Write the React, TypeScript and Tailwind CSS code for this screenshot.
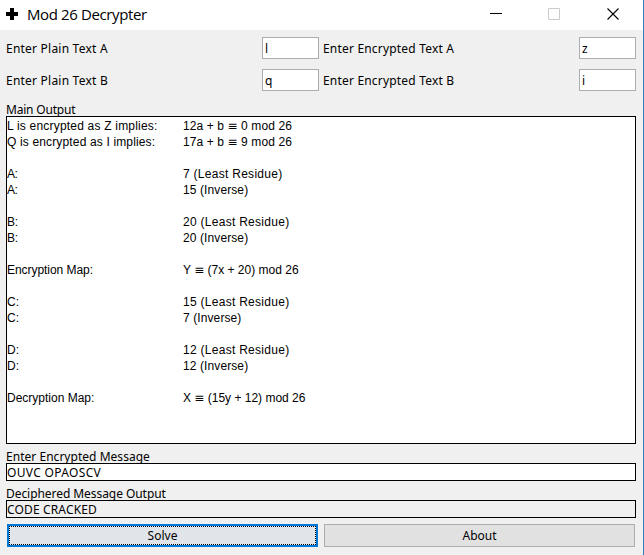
import type { ReactNode } from 'react';

const tahoma = "font-['Noto_Sans',sans-serif] text-[12px]";

const output: [string, string, string, string][] = [
  ['L is encrypted as Z implies:', 'tracking-[0.2px]', '12a + b ≡ 0 mod 26', 'tracking-[0.1px]'],
  ['Q is encrypted as I implies:', 'tracking-[0.15px]', '17a + b ≡ 9 mod 26', 'tracking-[0.1px]'],
  ['', '', '', ''],
  ['A:', 'tracking-[-0.5px]', '7 (Least Residue)', 'tracking-[0.28px]'],
  ['A:', 'tracking-[-0.5px]', '15 (Inverse)', 'tracking-[0.1px]'],
  ['', '', '', ''],
  ['B:', 'tracking-[-0.3px]', '20 (Least Residue)', 'tracking-[0.28px]'],
  ['B:', 'tracking-[-0.3px]', '20 (Inverse)', 'tracking-[0.1px]'],
  ['', '', '', ''],
  ['Encryption Map:', 'tracking-[-0.05px]', 'Y ≡ (7x + 20) mod 26', 'tracking-normal'],
  ['', '', '', ''],
  ['C:', '', '15 (Least Residue)', 'tracking-[0.28px]'],
  ['C:', '', '7 (Inverse)', 'tracking-[0.1px]'],
  ['', '', '', ''],
  ['D:', '', '12 (Least Residue)', 'tracking-[0.28px]'],
  ['D:', '', '12 (Inverse)', 'tracking-[0.1px]'],
  ['', '', '', ''],
  ['Decryption Map:', '', 'X ≡ (15y + 12) mod 26', 'tracking-normal'],
];

function Equation({ text }: { text: string }) {
  const [left, right] = text.split('≡');
  if (right === undefined) return <>{text}</>;
  return (
    <>
      {left}
      <span className="font-['DejaVu_Sans',sans-serif] leading-none">≡</span>
      {right}
    </>
  );
}

function Field({ value }: { value: string }) {
  return (
    <div className="h-[22px] w-[57px] shrink-0 border border-[#abadb3] bg-white pl-[2px] leading-[21px]">{value}</div>
  );
}

function InputRow({ letter, plain, encrypted }: { letter: string; plain: string; encrypted: string }) {
  return (
    <div className="flex h-[22px] leading-[23px]">
      <div className="w-[256px] tracking-[0.22px]">Enter Plain Text {letter}</div>
      <Field value={plain} />
      <div className="ml-[4px] w-[256px] tracking-[0.19px]">Enter Encrypted Text {letter}</div>
      <Field value={encrypted} />
    </div>
  );
}

function Caption({ children, className }: { children: ReactNode; className: string }) {
  return <div className={`h-[13px] leading-[14px] ${className}`}>{children}</div>;
}

export default function App() {
  return (
    <div className={`flex h-[555px] w-[644px] flex-col overflow-hidden whitespace-nowrap border-r border-[#2f7fbc] bg-[#f0f0f0] text-black ${tahoma}`}>
      <header className="flex h-[30px] shrink-0 bg-white">
        <svg className="ml-[6px] mt-[8px] h-[12px] w-[12px]" viewBox="0 0 12 12" shapeRendering="crispEdges">
          <path d="M4 0h4v4h4v4H8v4H4V8H0V4h4z" />
        </svg>
        <h1 className="ml-[9px] font-['Open_Sans',sans-serif] text-[15px] leading-[29px] tracking-[-0.38px]">Mod 26 Decrypter</h1>
        <svg className="ml-auto mr-[23px] mt-[7px] h-[14px] w-[130px] shrink-0" viewBox="0 0 130 14" fill="none">
          <path d="M0 6.5h12" stroke="black" />
          <path d="M58.5 1.5h11v11h-11z" stroke="#cccccc" />
          <path d="M117.5 1.5l11 11M128.5 1.5l-11 11" stroke="black" strokeWidth="1.1" />
        </svg>
      </header>
      <main className="flex flex-col pl-[6px] pr-[7px] pt-[7px]">
        <InputRow letter="A" plain="l" encrypted="z" />
        <div className="h-[10px]" />
        <InputRow letter="B" plain="q" encrypted="i" />
        <Caption className="mt-[12px] tracking-[-0.2px]">Main Output</Caption>
        <div className="h-[328px] border border-black bg-white pt-[1px] font-['Liberation_Sans',Arial,sans-serif] text-[12px]">
          {output.map(([label, labelTracking, value, valueTracking], i) => (
            <div key={i} className="flex h-[16px] leading-[16px]">
              <span className={`w-[176px] ${labelTracking}`}>{label}</span>
              <span className={valueTracking}>
                <Equation text={value} />
              </span>
            </div>
          ))}
        </div>
        <Caption className="mt-[6px] tracking-[0.03px]">Enter Encrypted Message</Caption>
        <div className="h-[18px] border border-black bg-white leading-[17px] tracking-[0.33px]">OUVC OPAOSCV</div>
        <Caption className="mt-[6px] tracking-[-0.06px]">Deciphered Message Output</Caption>
        <div className="h-[18px] border border-black leading-[17px] tracking-[0.15px]">CODE CRACKED</div>
        <div className="mt-[6px] flex gap-[6px] pl-px pr-px">
          <button className="h-[23px] w-[311px] border-2 border-[#0078d7] bg-[#e1e5e9] leading-[19px]">
            <span className="block h-[19px] border border-dotted border-black leading-[18px]">Solve</span>
          </button>
          <button className="h-[23px] w-[311px] border border-[#adadad] bg-[#e1e1e1] leading-[22px]">About</button>
        </div>
      </main>
    </div>
  );
}
